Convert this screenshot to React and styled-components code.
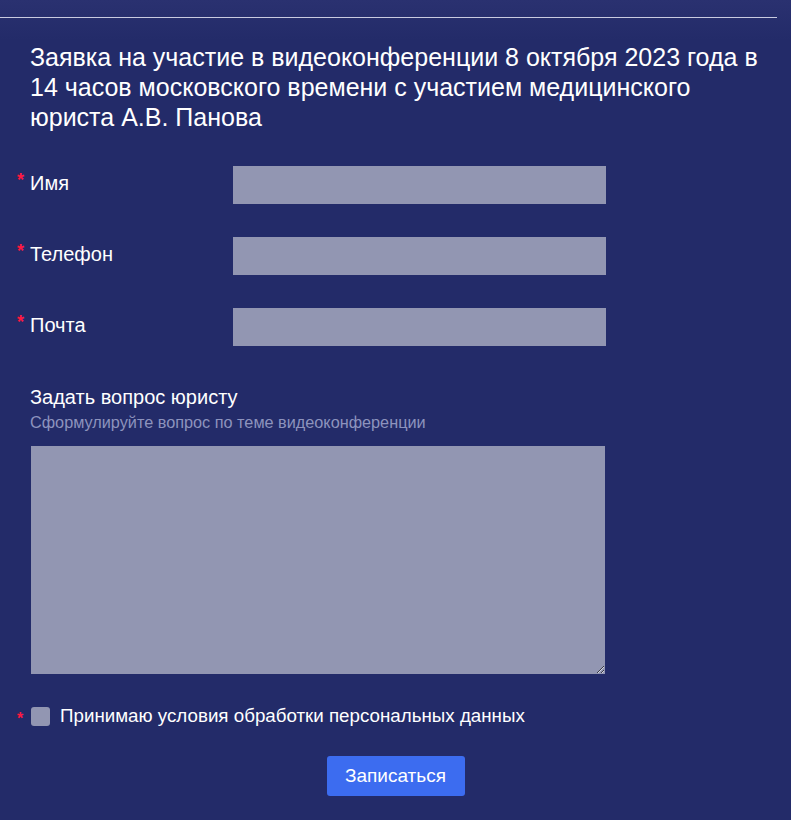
import React, { useState } from 'react';
import styled, { createGlobalStyle } from 'styled-components';

const GlobalStyle = createGlobalStyle`
  html, body {
    margin: 0;
    padding: 0;
    background: #232b69;
  }
  body {
    font-family: Arial, "Liberation Sans", sans-serif;
    color: #ffffff;
  }
`;

const Page = styled.div`
  min-height: 820px;
  background: linear-gradient(#2a3170 0px, #232b69 40px);
  padding-top: 17px;
  box-sizing: border-box;
`;

const Divider = styled.hr`
  width: 777px;
  margin: 0;
  border: none;
  height: 1px;
  background: #c9cbe0;
`;

const Title = styled.h1`
  margin: 24px 0 0 30px;
  width: 736px;
  font-size: 25px;
  line-height: 30px;
  font-weight: 400;
  color: #ffffff;
`;

const Form = styled.form`
  display: flex;
  flex-direction: column;
  padding: 0 0 0 17px;
  margin-top: 34px;
`;

const Field = styled.div`
  display: flex;
  align-items: center;
  height: 38px;
  margin-bottom: 33px;
`;

const Star = styled.span`
  display: inline-block;
  width: 13px;
  color: #ff1840;
  font-size: ${p => (p.small ? 16 : 18)}px;
  font-weight: 700;
  line-height: 18px;
  align-self: flex-start;
  margin-top: ${p => p.top}px;
`;

const Label = styled.label`
  width: 203px;
  padding-bottom: 3px;
  font-size: 20px;
  color: #ffffff;
`;

const Input = styled.input`
  width: 373px;
  height: 38px;
  box-sizing: border-box;
  border: none;
  background: #9296b2;
  outline: none;
`;

const Question = styled.div`
  display: flex;
  flex-direction: column;
  padding-left: 13px;
  margin-top: 6px;
`;

const QuestionTitle = styled.div`
  font-size: 20px;
  line-height: 24px;
  color: #ffffff;
`;

const QuestionHint = styled.div`
  font-size: 16.25px;
  line-height: 20px;
  margin-top: 3px;
  color: #8d93bd;
`;

const TextArea = styled.textarea`
  width: 574px;
  height: 228px;
  margin: 14px 0 0 1px;
  box-sizing: border-box;
  border: none;
  background: #9296b2;
  outline: none;
  resize: both;
`;

const Agree = styled.label`
  display: flex;
  align-items: center;
  height: 22px;
  margin-top: 31px;
  font-size: 18.75px;
  color: #ffffff;
`;

const Box = styled.span`
  width: 19px;
  height: 19px;
  border-radius: 3px;
  background: ${p => (p.checked ? '#3c6cf0' : '#9296b2')};
  margin: 0 10px 0 1px;
  cursor: pointer;
`;

const Submit = styled.button`
  align-self: center;
  margin: 29px 0 0 -17px;
  width: 138px;
  height: 40px;
  border: none;
  border-radius: 3px;
  background: #3c6cf0;
  color: #ffffff;
  font-family: Arial, "Liberation Sans", sans-serif;
  font-size: 19px;
  cursor: pointer;
`;

const fields = ['Имя', 'Телефон', 'Почта'];

const App = () => {
  const [agreed, setAgreed] = useState(false);

  return (
    <Page>
      <GlobalStyle />
      <Divider />
      <Title>
        Заявка на участие в видеоконференции 8 октября 2023 года в 14 часов
        московского времени с участием медицинского юриста А.В. Панова
      </Title>
      <Form onSubmit={e => e.preventDefault()}>
        {fields.map(name => (
          <Field key={name}>
            <Star top={5}>*</Star>
            <Label>{name}</Label>
            <Input type="text" />
          </Field>
        ))}
        <Question>
          <QuestionTitle>Задать вопрос юристу</QuestionTitle>
          <QuestionHint>Сформулируйте вопрос по теме видеоконференции</QuestionHint>
          <TextArea />
        </Question>
        <Agree onClick={() => setAgreed(!agreed)}>
          <Star small top={5}>*</Star>
          <Box checked={agreed} />
          Принимаю условия обработки персональных данных
        </Agree>
        <Submit type="submit">Записаться</Submit>
      </Form>
    </Page>
  );
};

export default App;
